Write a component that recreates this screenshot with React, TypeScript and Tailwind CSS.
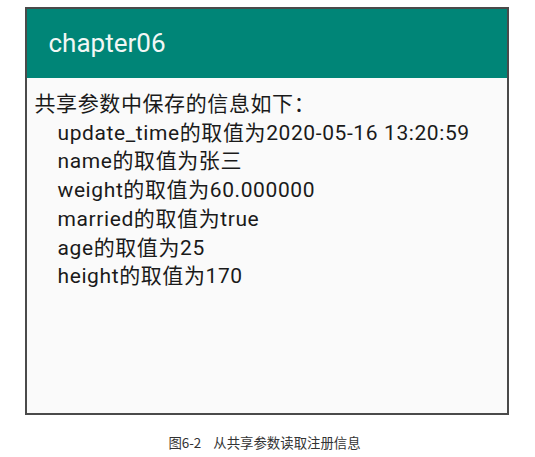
export default function App() {
  const rows = [
    "update_time的取值为2020-05-16 13:20:59",
    "name的取值为张三",
    "weight的取值为60.000000",
    "married的取值为true",
    "age的取值为25",
    "height的取值为170",
  ]

  return (
    <div className="w-[535px] h-[457px] bg-white pt-[7px] flex flex-col items-center font-['Roboto','Noto_Sans_CJK_SC',sans-serif]">
      <div className="w-[484px] h-[408px] ml-[-2px] border-2 border-[#4a4a4a] bg-[#fafafa] flex flex-col">
        <div className="h-[69px] bg-[#008577] flex items-center pl-[22px]">
          <span className="text-[26px] text-[#f2f7f5]">chapter06</span>
        </div>
        <div className="pt-[12px] pl-[8px] text-[21px] tracking-[0.6px] leading-[28.7px] text-[#1a1a1a]">
          <div>共享参数中保存的信息如下：</div>
          {rows.map((r) => (
            <div key={r} className="pl-[23px]">
              {r}
            </div>
          ))}
        </div>
      </div>
      <div className="mt-[17px] ml-[-6px] text-[13.4px] text-[#333] font-['Noto_Sans_CJK_SC',sans-serif]">
        图6-2&nbsp;&nbsp;&nbsp;&nbsp;从共享参数读取注册信息
      </div>
    </div>
  )
}
